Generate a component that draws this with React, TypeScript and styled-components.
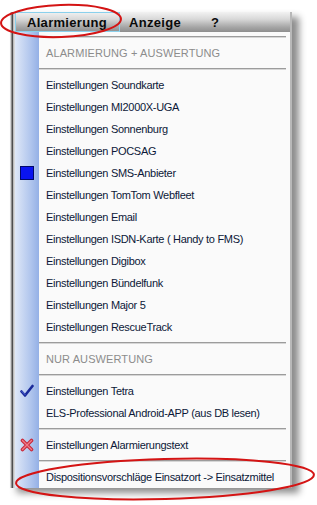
import React from 'react'
import styled, { createGlobalStyle } from 'styled-components'

const GlobalStyle = createGlobalStyle`
  html, body {
    margin: 0;
    padding: 0;
    background: #ffffff;
  }
`

type Entry =
  | { kind: 'sep' }
  | { kind: 'header'; label: string }
  | { kind: 'item'; label: string; icon?: 'square' | 'check' | 'cross' }

const entries: Entry[] = [
  { kind: 'sep' },
  { kind: 'header', label: 'ALARMIERUNG + AUSWERTUNG' },
  { kind: 'sep' },
  { kind: 'item', label: 'Einstellungen Soundkarte' },
  { kind: 'item', label: 'Einstellungen MI2000X-UGA' },
  { kind: 'item', label: 'Einstellungen Sonnenburg' },
  { kind: 'item', label: 'Einstellungen POCSAG' },
  { kind: 'item', label: 'Einstellungen SMS-Anbieter', icon: 'square' },
  { kind: 'item', label: 'Einstellungen TomTom Webfleet' },
  { kind: 'item', label: 'Einstellungen Email' },
  { kind: 'item', label: 'Einstellungen ISDN-Karte ( Handy to FMS)' },
  { kind: 'item', label: 'Einstellungen Digibox' },
  { kind: 'item', label: 'Einstellungen Bündelfunk' },
  { kind: 'item', label: 'Einstellungen Major 5' },
  { kind: 'item', label: 'Einstellungen RescueTrack' },
  { kind: 'sep' },
  { kind: 'header', label: 'NUR AUSWERTUNG' },
  { kind: 'sep' },
  { kind: 'item', label: 'Einstellungen Tetra', icon: 'check' },
  { kind: 'item', label: 'ELS-Professional Android-APP (aus DB lesen)' },
  { kind: 'sep' },
  { kind: 'item', label: 'Einstellungen Alarmierungstext', icon: 'cross' },
  { kind: 'sep' },
  { kind: 'item', label: 'Dispositionsvorschläge Einsatzort -> Einsatzmittel' },
]

const MenuIcon = ({ type }: { type: 'square' | 'check' | 'cross' }) => {
  if (type === 'square') {
    return (
      <svg width="14" height="14" viewBox="0 0 14 14">
        <rect x="0.5" y="0.5" width="13" height="13" fill="#0a14f0" stroke="#00086a" />
      </svg>
    )
  }
  if (type === 'check') {
    return (
      <svg width="14" height="14" viewBox="0 0 14 14">
        <path d="M1.5 7.5 L5 11.5 L12.5 2" fill="none" stroke="#1a2a9a" strokeWidth="2.6" strokeLinecap="round" strokeLinejoin="round" />
        <path d="M2 7.5 L5 10.5" fill="none" stroke="#5a70e0" strokeWidth="1" strokeLinecap="round" />
      </svg>
    )
  }
  return (
    <svg width="14" height="14" viewBox="0 0 14 14">
      <path d="M2.5 2.5 L11.5 11.5 M11.5 2.5 L2.5 11.5" fill="none" stroke="#c8283a" strokeWidth="3.6" strokeLinecap="round" />
      <path d="M2.5 2.5 L11.5 11.5 M11.5 2.5 L2.5 11.5" fill="none" stroke="#f07a88" strokeWidth="1.4" strokeLinecap="round" />
    </svg>
  )
}

const App = () => {
  return (
    <Stage>
      <GlobalStyle />
      <Window>
        <BackStrip />
        <MenuColumn>
          <MenuBar>
            <BarItem $active>Alarmierung</BarItem>
            <BarItem>Anzeige</BarItem>
            <BarItem>?</BarItem>
          </MenuBar>
          <Dropdown>
            {entries.map((e, i) => {
              if (e.kind === 'sep') {
                return (
                  <Row key={i} $sep>
                    <Gutter />
                    <SepCell><Line /></SepCell>
                  </Row>
                )
              }
              return (
                <Row key={i}>
                  <Gutter>{e.kind === 'item' && e.icon ? <MenuIcon type={e.icon} /> : null}</Gutter>
                  <Label $header={e.kind === 'header'}>{e.label}</Label>
                </Row>
              )
            })}
          </Dropdown>
        </MenuColumn>
      </Window>
      <Marks width="317" height="505" viewBox="0 0 317 505">
        <ellipse cx="61" cy="21" rx="60" ry="16" transform="rotate(-2 61 21)" fill="none" stroke="#d41414" strokeWidth="2" />
        <ellipse cx="165" cy="479" rx="149" ry="20" transform="rotate(-1.6 165 479)" fill="none" stroke="#d41414" strokeWidth="2" />
      </Marks>
    </Stage>
  )
}

const Stage = styled.div`
  position: relative;
  width: 317px;
  height: 505px;
  overflow: hidden;
  background: #ffffff;
  padding: 12px 0 0 10px;
  box-sizing: border-box;
`

const Window = styled.div`
  display: flex;
  width: 282px;
  box-shadow: 7px 5px 7px rgba(0, 0, 0, 0.45);
`

const BackStrip = styled.div`
  width: 5px;
  flex: none;
  background: linear-gradient(to right, #d6d6d6 0 1px, #8e8e8e 1px 2px, #4e4e4e 2px 3px, #bdbdbd 3px 4px, #d8d8d8 4px);
`

const MenuColumn = styled.div`
  flex: 1;
  display: flex;
  flex-direction: column;
  border-right: 2px solid #b8b8b8;
`

const MenuBar = styled.div`
  display: flex;
  align-items: stretch;
  height: 20px;
  background: linear-gradient(#f2f2f2 0%, #d9d9d9 35%, #a6a6a6 75%, #8e8e8e 100%);
  font-family: 'Liberation Sans', Arial, sans-serif;
  font-weight: bold;
  font-size: 13px;
  letter-spacing: 0.3px;
  color: #0a0a0a;
`

const BarItem = styled.div<{ $active?: boolean }>`
  display: flex;
  align-items: center;
  box-sizing: border-box;
  padding: 0 8px;
  border: 1px solid ${({ $active }) => ($active ? '#8ad0ec' : 'transparent')};
  width: ${({ $active }) => ($active ? '105px' : 'auto')};
  &:first-child {
    padding-left: 11px;
  }
  &:last-child {
    padding-left: 20px;
  }
`

const Dropdown = styled.div`
  display: flex;
  flex-direction: column;
  background: #fafafa;
`

const Row = styled.div<{ $sep?: boolean }>`
  display: flex;
  height: ${({ $sep }) => ($sep ? '10px' : '22px')};
`

const Gutter = styled.div`
  width: 24px;
  flex: none;
  display: flex;
  align-items: center;
  justify-content: center;
  background: linear-gradient(to right, #dfe8f7, #b4c8ee 60%, #94b0e6);
`

const SepCell = styled.div`
  flex: 1;
  display: flex;
  align-items: center;
  padding-right: 4px;
`

const Line = styled.div`
  flex: 1;
  height: 1px;
  background: #9c9c9c;
  border-bottom: 1px solid #d6d6d6;
`

const Label = styled.div<{ $header?: boolean }>`
  flex: 1;
  display: flex;
  align-items: center;
  padding-left: 7px;
  white-space: nowrap;
  font-family: 'Liberation Sans', Arial, sans-serif;
  font-size: 11px;
  letter-spacing: ${({ $header }) => ($header ? '0.1px' : '-0.3px')};
  color: ${({ $header }) => ($header ? '#8c8c8c' : '#0c1838')};
`

const Marks = styled.svg`
  position: absolute;
  left: 0;
  top: 0;
  pointer-events: none;
`

export default App
